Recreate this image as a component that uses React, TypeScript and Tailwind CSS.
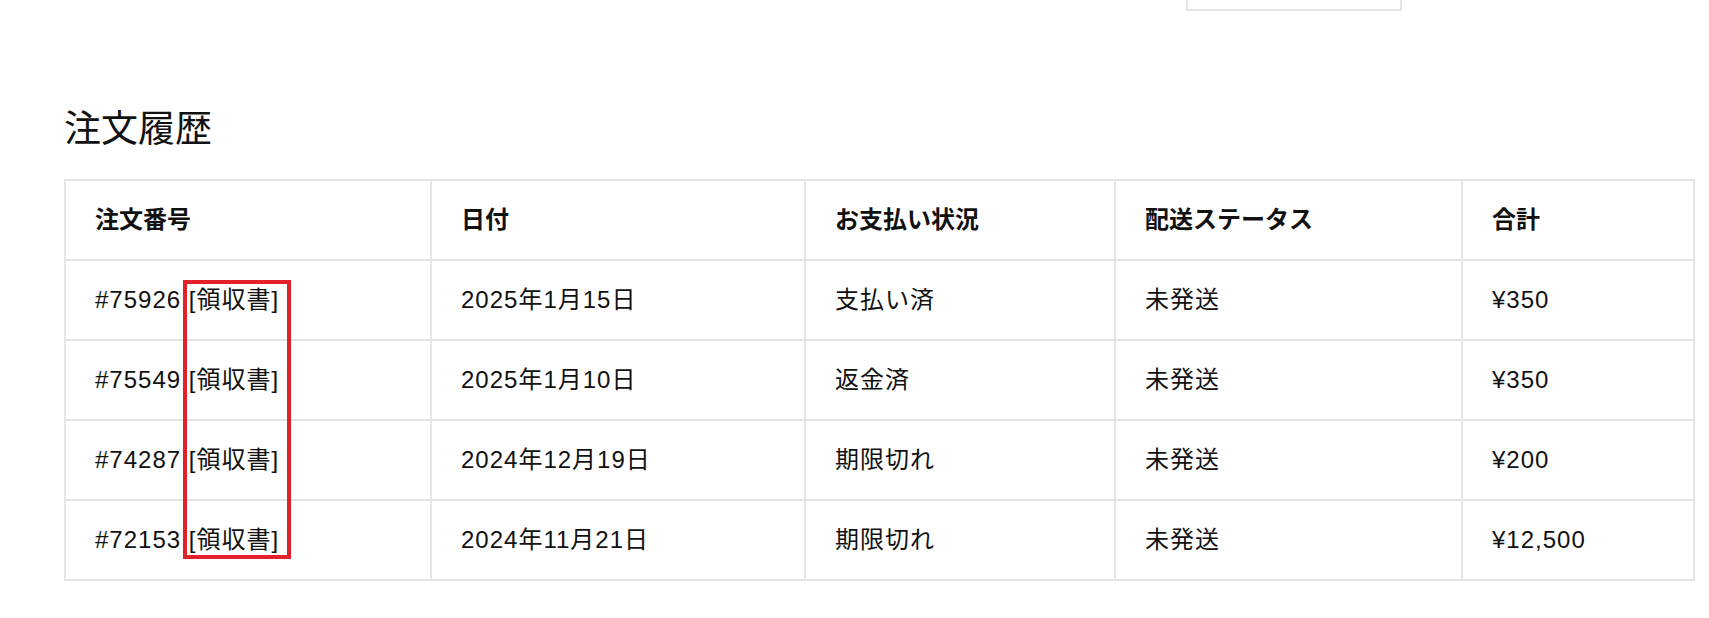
import React from "react";

const rows = [
  { no: "#75926", date: "2025年1月15日", pay: "支払い済", ship: "未発送", total: "¥350" },
  { no: "#75549", date: "2025年1月10日", pay: "返金済", ship: "未発送", total: "¥350" },
  { no: "#74287", date: "2024年12月19日", pay: "期限切れ", ship: "未発送", total: "¥200" },
  { no: "#72153", date: "2024年11月21日", pay: "期限切れ", ship: "未発送", total: "¥12,500" },
];

const headers = ["注文番号", "日付", "お支払い状況", "配送ステータス", "合計"];

export default function App() {
  return (
    <div
      className="w-[1709px] h-[618px] bg-white text-[#111] overflow-hidden"
      style={{ fontFamily: '"Liberation Sans", "Noto Sans CJK JP", "Noto Sans", sans-serif' }}
    >
      <div className="ml-[1186px] w-[216px] h-[11px] border-x-2 border-b-2 border-[#e5e5e5]" />
      <h2
        className="ml-[64px] mt-[97px] text-[37px] leading-[37px] font-normal"
        style={{ fontFamily: '"Noto Sans CJK JP", sans-serif' }}
      >
        注文履歴
      </h2>
      <div className="relative ml-[64px] mt-[34px] w-[1629px]">
        <table className="table-fixed border-collapse w-[1629px]">
          <colgroup>
            <col className="w-[366px]" />
            <col className="w-[374px]" />
            <col className="w-[310px]" />
            <col className="w-[347px]" />
            <col className="w-[232px]" />
          </colgroup>
          <thead>
            <tr className="h-[80px]">
              {headers.map((h) => (
                <th
                  key={h}
                  className="border-2 border-[#e5e5e5] pl-[29px] text-left text-[24px] font-bold align-middle"
                >
                  {h}
                </th>
              ))}
            </tr>
          </thead>
          <tbody className="tracking-[1px]">
            {rows.map((r) => (
              <tr key={r.no} className="h-[80px]">
                <td className="border-2 border-[#e5e5e5] pl-[29px] text-[24px] align-middle">
                  {r.no} <span>[領収書]</span>
                </td>
                <td className="border-2 border-[#e5e5e5] pl-[29px] text-[24px] align-middle">{r.date}</td>
                <td className="border-2 border-[#e5e5e5] pl-[29px] text-[24px] align-middle">{r.pay}</td>
                <td className="border-2 border-[#e5e5e5] pl-[29px] text-[24px] align-middle">{r.ship}</td>
                <td className="border-2 border-[#e5e5e5] pl-[29px] text-[24px] align-middle">{r.total}</td>
              </tr>
            ))}
          </tbody>
        </table>
        <div className="absolute left-[119px] top-[101px] w-[108px] h-[279px] border-[4px] border-[#e3212b]" />
      </div>
    </div>
  );
}
